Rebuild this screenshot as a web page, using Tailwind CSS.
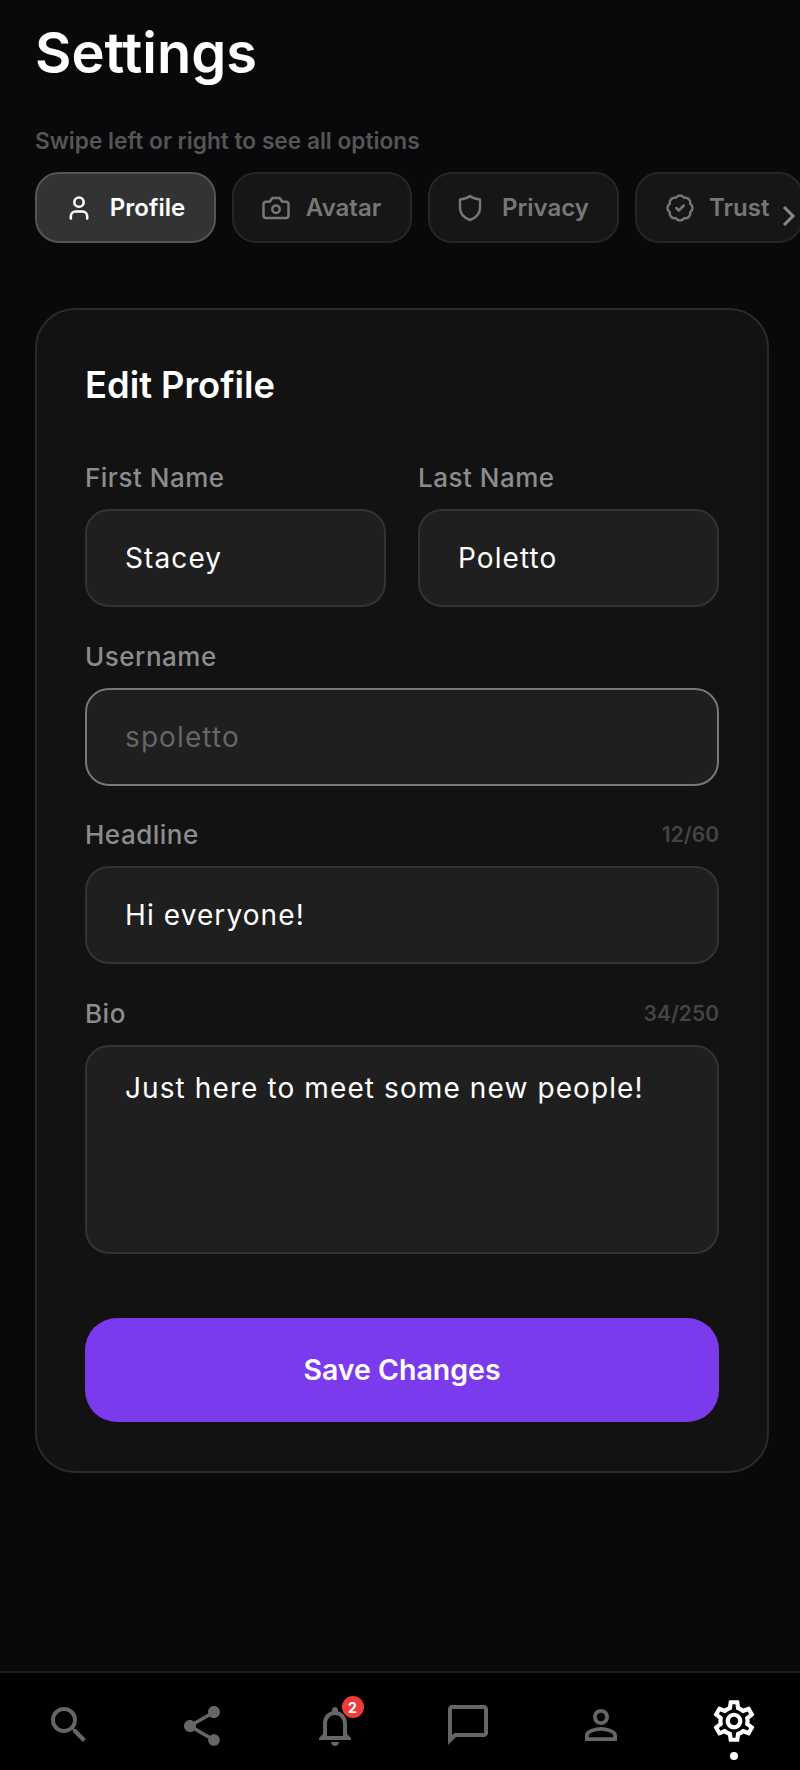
<!DOCTYPE html>
<html lang="en">
<head>
  <meta charset="UTF-8" />
  <meta name="viewport" content="width=device-width, initial-scale=1.0" />
  <title>Settings</title>
  <script src="https://cdn.jsdelivr.net/npm/@tailwindcss/browser@4"></script>
</head>
<body class="bg-[#09090b] font-[Inter,sans-serif]">
  <div class="h-[1770px] w-[800px] flex flex-col overflow-hidden">
    <main class="flex-1 pt-[17px]">
      <h1 class="pl-[35px] text-[56px] leading-[72px] font-semibold text-white">Settings</h1>
      <p class="pl-[35px] mt-[38px] text-[22.700px] leading-[28px] font-semibold text-[#555555]">Swipe left or right to see all options</p>

      <!-- tabs -->
      <div class="relative mt-[17px] pl-[35px] flex gap-[16px] overflow-hidden">
        <div class="shrink-0 w-[181px] h-[71px] rounded-[24px] bg-[#333333] border-2 border-[#555555] flex items-center justify-center gap-[17px] pr-[1px] text-white text-[24px] font-semibold">
          <svg class="w-[28px] h-[28px]" viewBox="0 0 24 24" fill="none" stroke="currentColor" stroke-width="2.200" stroke-linecap="round" stroke-linejoin="round"><path d="M19 21v-2a4 4 0 0 0-4-4H9a4 4 0 0 0-4 4v2"/><circle cx="12" cy="7" r="4"/></svg>
          <span class="pt-[1px]">Profile</span>
        </div>
        <div class="shrink-0 w-[180px] h-[71px] rounded-[24px] bg-[#161616] border-2 border-[#262626] flex items-center justify-center gap-[15px] pr-[2px] text-[#777777] text-[24px] font-semibold">
          <svg class="w-[30px] h-[30px]" viewBox="0 0 24 24" fill="none" stroke="currentColor" stroke-width="2" stroke-linecap="round" stroke-linejoin="round"><path d="M4 7h3l2-3h6l2 3h3a2 2 0 0 1 2 2v9a2 2 0 0 1-2 2H4a2 2 0 0 1-2-2V9a2 2 0 0 1 2-2z"/><circle cx="12" cy="13" r="3"/></svg>
          <span class="pt-[1px]">Avatar</span>
        </div>
        <div class="shrink-0 w-[191px] h-[71px] rounded-[24px] bg-[#161616] border-2 border-[#262626] flex items-center justify-center gap-[20px] text-[#777777] text-[24px] font-semibold">
          <svg class="w-[24px] h-[28px]" viewBox="0 0 24 28" fill="none" stroke="currentColor" stroke-width="2.400" stroke-linecap="round" stroke-linejoin="round"><path d="M12 2c2.500 2 6 3.200 10 3.500V14c0 6-4 9.800-10 12C6 23.800 2 20 2 14V5.500C6 5.200 9.500 4 12 2z"/></svg>
          <span class="pt-[1px]">Privacy</span>
        </div>
        <div class="shrink-0 w-[168px] h-[71px] rounded-[24px] bg-[#161616] border-2 border-[#262626] flex items-center gap-[14px] pl-[28px] text-[#777777] text-[24px] font-semibold">
          <svg class="w-[30px] h-[30px]" viewBox="0 0 24 24" fill="none" stroke="currentColor" stroke-width="2" stroke-linecap="round" stroke-linejoin="round"><path d="M3.850 8.620a4 4 0 0 1 4.780-4.770 4 4 0 0 1 6.740 0 4 4 0 0 1 4.780 4.780 4 4 0 0 1 0 6.740 4 4 0 0 1-4.770 4.780 4 4 0 0 1-6.750 0 4 4 0 0 1-4.780-4.770 4 4 0 0 1 0-6.760z"/><path d="m9 12 2 2 4-4"/></svg>
          <span class="pt-[1px]">Trust</span>
        </div>
        <svg class="absolute right-0 top-[32px] w-[20px] h-[24px] text-[#888888]" viewBox="0 0 20 24" fill="none" stroke="currentColor" stroke-width="3"><path d="M4 3l9 9-9 9"/></svg>
      </div>

      <!-- card -->
      <section class="ml-[35px] mt-[65px] w-[734px] h-[1165px] rounded-[40px] bg-[#121212] border-2 border-[#2a2a2a] px-[48px] pt-[53px]">
        <h2 class="text-[36.300px] leading-[44px] font-semibold text-white">Edit Profile</h2>

        <div class="mt-[55px] grid grid-cols-2 gap-x-[32px]">
          <div>
            <label class="block text-[26px] leading-[32px] font-medium tracking-[0.5px] text-[#8c8c8c]">First Name</label>
            <div class="mt-[15px] h-[98px] rounded-[24px] bg-[#1f1f1f] border-2 border-[#333333] flex items-center px-[38px] text-[28px] text-white tracking-[1.100px]">Stacey</div>
          </div>
          <div>
            <label class="block text-[26px] leading-[32px] font-medium tracking-[0.5px] text-[#8c8c8c]">Last Name</label>
            <div class="mt-[15px] h-[98px] rounded-[24px] bg-[#1f1f1f] border-2 border-[#333333] flex items-center px-[38px] text-[28px] text-white tracking-[1.100px]">Poletto</div>
          </div>
        </div>

        <label class="block mt-[34px] text-[26px] leading-[32px] font-medium tracking-[0.5px] text-[#8c8c8c]">Username</label>
        <div class="mt-[15px] h-[98px] rounded-[24px] bg-[#1f1f1f] border-2 border-[#777777] flex items-center px-[38px] text-[28px] text-[#666666] tracking-[1.100px]">spoletto</div>

        <div class="mt-[33px] flex justify-between items-center h-[32px]">
          <label class="text-[26px] leading-[32px] font-medium tracking-[0.5px] text-[#8c8c8c]">Headline</label>
          <span class="text-[21px] font-semibold text-[#444444]">12/60</span>
        </div>
        <div class="mt-[15px] h-[98px] rounded-[24px] bg-[#1f1f1f] border-2 border-[#333333] flex items-center px-[38px] text-[28px] text-white tracking-[1.100px]">Hi everyone!</div>

        <div class="mt-[34px] flex justify-between items-center h-[32px]">
          <label class="text-[26px] leading-[32px] font-medium tracking-[0.5px] text-[#8c8c8c]">Bio</label>
          <span class="text-[21px] font-semibold text-[#444444]">34/250</span>
        </div>
        <div class="mt-[15px] h-[209px] rounded-[24px] bg-[#1f1f1f] border-2 border-[#333333] px-[38px] pt-[23px] text-[28px] leading-[36px] text-white tracking-[1.100px]">Just here to meet some new people!</div>

        <button class="mt-[64px] w-full h-[104px] rounded-[32px] bg-[#7c3aed] text-white text-[28.500px] font-semibold">Save Changes</button>
      </section>
    </main>

    <!-- bottom nav -->
    <nav class="h-[99px] bg-black border-t-2 border-[#1c1c1c] grid grid-cols-6 justify-items-center items-start pl-[2px] pt-[28px] text-[#666666]">
      <svg class="w-[48px] h-[48px]" viewBox="0 0 24 24" fill="currentColor"><path d="M15.500 14h-.79l-.28-.27A6.470 6.470 0 0 0 16 9.500 6.500 6.500 0 1 0 9.500 16c1.610 0 3.090-.59 4.230-1.570l.27.28v.79l5 4.990L20.490 19l-4.990-5zm-6 0C7.010 14 5 11.990 5 9.500S7.010 5 9.500 5 14 7.010 14 9.500 11.990 14 9.500 14z"/></svg>
      <svg class="w-[48px] h-[48px] mt-[1px]" viewBox="0 0 24 24" fill="currentColor"><path d="M18 16.080c-.76 0-1.440.3-1.960.77L8.910 12.700c.05-.23.09-.46.09-.7s-.04-.47-.09-.7l7.050-4.110c.54.5 1.250.81 2.040.81 1.660 0 3-1.340 3-3s-1.340-3-3-3-3 1.340-3 3c0 .24.040.47.090.7L8.040 9.810C7.500 9.310 6.790 9 6 9c-1.660 0-3 1.340-3 3s1.340 3 3 3c.79 0 1.500-.31 2.040-.81l7.120 4.160c-.05.21-.08.43-.08.650 0 1.610 1.310 2.920 2.920 2.920s2.920-1.310 2.920-2.920-1.310-2.920-2.920-2.920z"/></svg>
      <div class="relative w-[48px] h-[48px] mt-[1px]">
        <svg class="w-[48px] h-[48px]" viewBox="0 0 24 24" fill="currentColor"><path d="M12 22c1.100 0 2-.9 2-2h-4c0 1.100.9 2 2 2zm6-6v-5c0-3.070-1.630-5.640-4.500-6.320V4c0-.83-.67-1.500-1.500-1.500s-1.500.67-1.500 1.500v.68C7.640 5.360 6 7.920 6 11v5l-2 2v1h16v-1l-2-2zm-2 1H8v-6c0-2.480 1.510-4.500 4-4.500s4 2.020 4 4.500v6z"/></svg>
        <span class="absolute -top-[6px] -right-[5px] w-[22px] h-[22px] rounded-full bg-[#ef3b3b] text-white text-[14px] font-bold flex items-center justify-center">2</span>
      </div>
      <svg class="w-[48px] h-[48px]" viewBox="0 0 24 24" fill="currentColor"><path d="M20 2H4c-1.100 0-2 .9-2 2v18l4-4h14c1.100 0 2-.9 2-2V4c0-1.100-.9-2-2-2zm0 14H5.170L4 17.170V4h16v12z"/></svg>
      <svg class="w-[48px] h-[48px]" viewBox="0 0 24 24" fill="currentColor"><path d="M12 5.900a2.100 2.100 0 1 1 0 4.200 2.100 2.100 0 0 1 0-4.200m0 9c2.970 0 6.100 1.460 6.100 2.100v1.100H5.900V17c0-.64 3.130-2.100 6.100-2.100M12 4C9.790 4 8 5.790 8 8s1.790 4 4 4 4-1.790 4-4-1.790-4-4-4zm0 9c-2.670 0-8 1.340-8 4v3h16v-3c0-2.660-5.330-4-8-4z"/></svg>
      <div class="relative w-[50px] h-[50px] -mt-[5px] text-white">
        <svg class="w-[50px] h-[50px]" viewBox="0 0 24 24" fill="currentColor"><path d="M19.430 12.980c.04-.32.070-.64.070-.98s-.03-.66-.07-.98l2.110-1.650c.19-.15.24-.42.120-.64l-2-3.460c-.12-.22-.39-.3-.61-.22l-2.490 1c-.52-.4-1.080-.73-1.690-.98l-.38-2.650C14.460 2.180 14.250 2 14 2h-4c-.25 0-.46.18-.49.42l-.38 2.650c-.61.25-1.170.59-1.690.98l-2.490-1c-.23-.09-.49 0-.61.22l-2 3.460c-.13.22-.07.49.12.64l2.110 1.650c-.04.32-.07.65-.07.98s.03.66.07.98l-2.110 1.650c-.19.15-.24.42-.12.64l2 3.460c.12.22.39.3.61.22l2.490-1c.52.4 1.080.73 1.690.98l.38 2.650c.03.24.24.42.49.42h4c.25 0 .46-.18.49-.42l.38-2.650c.61-.25 1.170-.59 1.690-.98l2.490 1c.23.09.49 0 .61-.22l2-3.460c.12-.22.07-.49-.12-.64l-2.110-1.650zM17.450 11.270c.04.31.05.52.05.73 0 .21-.02.43-.05.73l-.14 1.130.89.7 1.080.84-.7 1.210-1.270-.51-1.040-.42-.9.68c-.43.32-.84.56-1.250.73l-1.060.43-.16 1.130-.2 1.350h-1.400l-.19-1.350-.16-1.130-1.060-.43c-.43-.18-.83-.41-1.230-.71l-.91-.7-1.060.43-1.270.51-.7-1.210 1.080-.84.89-.7-.14-1.130c-.03-.31-.05-.54-.05-.74s.02-.43.05-.73l.14-1.130-.89-.7-1.080-.84.7-1.210 1.270.51 1.040.42.9-.68c.43-.32.84-.56 1.250-.73l1.060-.43.16-1.130.2-1.350h1.390l.19 1.350.16 1.130 1.060.43c.43.18.83.41 1.230.71l.91.7 1.060-.43 1.270-.51.7 1.210-1.070.85-.89.7.14 1.130zM12 8c-2.210 0-4 1.790-4 4s1.790 4 4 4 4-1.790 4-4-1.790-4-4-4zm0 6c-1.100 0-2-.9-2-2s.9-2 2-2 2 .9 2 2-.9 2-2 2z"/></svg>
        <span class="absolute left-1/2 -translate-x-1/2 top-[56px] w-[8px] h-[8px] rounded-full bg-white"></span>
      </div>
    </nav>
  </div>
</body>
</html>
